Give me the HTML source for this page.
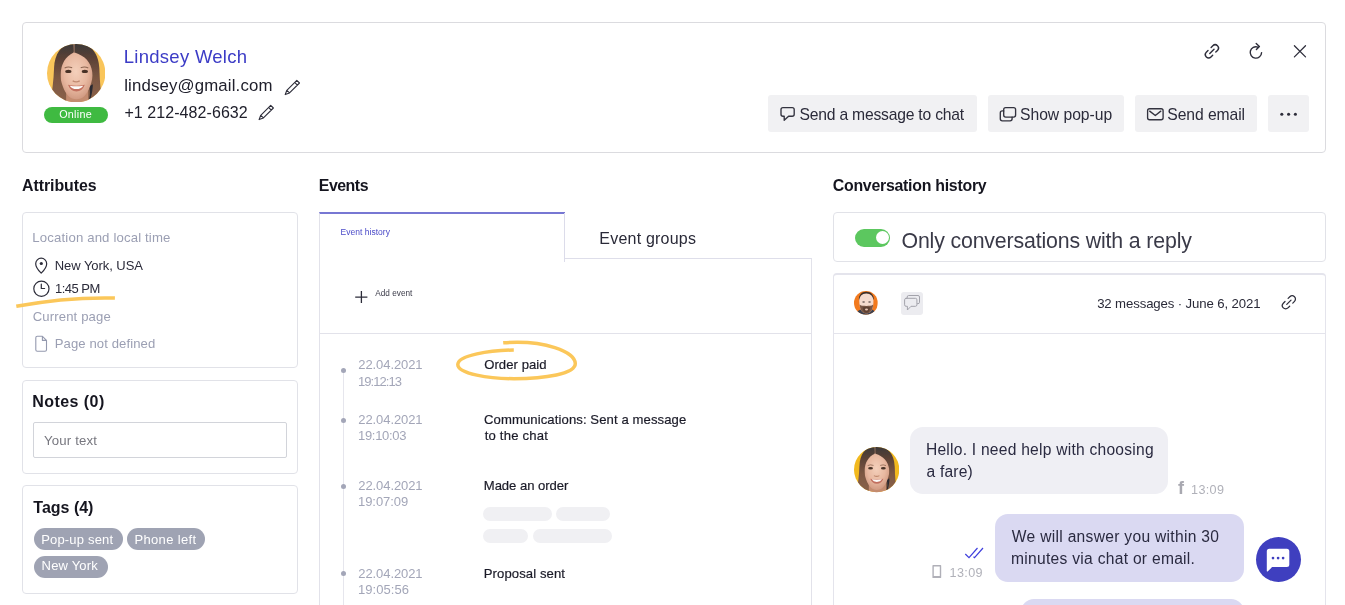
<!DOCTYPE html>
<html lang="en">
<head>
<meta charset="utf-8">
<title>Lindsey Welch</title>
<style>
*{box-sizing:border-box;margin:0;padding:0}
html,body{width:1345px;height:605px;overflow:hidden;background:#fff}
body{position:relative;font-family:"Liberation Sans",sans-serif;color:#2b2b3a;-webkit-font-smoothing:antialiased}
.abs{position:absolute}
.card{position:absolute;border:1px solid #e1e2e8;border-radius:4px;background:#fff}
.t{position:absolute;white-space:nowrap;line-height:1}
#root{position:absolute;left:0;top:0;width:1345px;height:605px;overflow:hidden;will-change:transform}
.h{font-weight:bold;color:#15151f}
.gray{color:#9b9fb3}
.btn{position:absolute;top:95px;height:37px;background:#f1f1f3;border-radius:3px}
.tag{position:absolute;height:21.5px;border-radius:11px;background:#9fa3b3}
.date{color:#a3a6b8}
.ev{color:#1b1b28;-webkit-text-stroke:0.2px #1b1b28}
.msg{color:#2a2a40}
.tagt{color:#fff}
.dot{position:absolute;left:341.1px;width:5.4px;height:5.4px;border-radius:50%;background:#a3a6b8}
.pill{position:absolute;height:13.5px;border-radius:7px;background:#f0f0f3}
</style>
<style id="fit">
#onl{left:59.20px;top:108.66px;font-size:10.8px;letter-spacing:0.250px}
#name{left:123.71px;top:47.64px;font-size:18.5px;letter-spacing:0.285px}
#email{left:124.15px;top:77.98px;font-size:16.8px;letter-spacing:0.162px}
#phone{left:124.40px;top:105.36px;font-size:16px;letter-spacing:0.072px}
#b1{left:799.58px;top:106.51px;font-size:15.7px;letter-spacing:-0.220px}
#b2{left:1020.07px;top:106.51px;font-size:15.7px;letter-spacing:-0.035px}
#b3{left:1167.29px;top:106.51px;font-size:15.7px;letter-spacing:-0.078px}
#h1{left:22.04px;top:177.84px;font-size:15.9px;letter-spacing:-0.051px}
#h2{left:318.79px;top:177.84px;font-size:15.9px;letter-spacing:-0.482px}
#h3{left:832.78px;top:177.74px;font-size:15.9px;letter-spacing:-0.267px}
#a1{left:32.35px;top:230.83px;font-size:13.2px;letter-spacing:0.144px}
#a2{left:54.79px;top:258.50px;font-size:13px;letter-spacing:-0.062px}
#a3{left:54.91px;top:281.70px;font-size:13px;letter-spacing:-0.499px}
#a4{left:32.68px;top:310.11px;font-size:13.1px;letter-spacing:0.147px}
#a5{left:54.71px;top:337.41px;font-size:13.1px;letter-spacing:0.098px}
#n1{left:32.35px;top:394.36px;font-size:16px;letter-spacing:0.430px}
#n2{left:44.04px;top:434.43px;font-size:13.2px;letter-spacing:0.163px}
#g1{left:33.31px;top:500.06px;font-size:16px;letter-spacing:-0.003px}
#t1{left:41.16px;top:532.80px;font-size:13px;letter-spacing:0.182px}
#t2{left:134.43px;top:532.80px;font-size:13px;letter-spacing:0.339px}
#t3{left:41.62px;top:559.30px;font-size:13px;letter-spacing:0.162px}
#e1{left:340.61px;top:228.40px;font-size:8.5px;letter-spacing:0.019px}
#e2{left:599.36px;top:231.16px;font-size:16px;letter-spacing:0.207px}
#e3{left:375.27px;top:289.66px;font-size:8.2px;letter-spacing:0.023px}
#d1a{left:358.35px;top:357.60px;font-size:13px;letter-spacing:-0.097px}
#d1b{left:358.03px;top:374.50px;font-size:13px;letter-spacing:-0.945px}
#d2a{left:358.35px;top:412.50px;font-size:13px;letter-spacing:-0.097px}
#d2b{left:358.03px;top:429.40px;font-size:13px;letter-spacing:-0.303px}
#d3a{left:358.35px;top:478.60px;font-size:13px;letter-spacing:-0.097px}
#d3b{left:358.03px;top:495.40px;font-size:13px;letter-spacing:-0.065px}
#d4a{left:358.35px;top:566.80px;font-size:13px;letter-spacing:-0.097px}
#d4b{left:358.03px;top:583.30px;font-size:13px;letter-spacing:0.042px}
#v1{left:484.20px;top:357.51px;font-size:13.1px;letter-spacing:0.060px}
#v2a{left:484.03px;top:413.41px;font-size:13.1px;letter-spacing:0.098px}
#v2b{left:484.67px;top:429.31px;font-size:13.1px;letter-spacing:0.217px}
#v3{left:483.77px;top:478.51px;font-size:13.1px;letter-spacing:-0.043px}
#v4{left:483.77px;top:566.71px;font-size:13.1px;letter-spacing:0.090px}
#c1t{left:901.48px;top:231.27px;font-size:21.3px;letter-spacing:-0.144px}
#c2t{left:1097.15px;top:297.03px;font-size:13.2px;letter-spacing:-0.122px}
#m1a{left:925.91px;top:441.99px;font-size:15.6px;letter-spacing:0.242px}
#m1b{left:926.55px;top:463.69px;font-size:15.6px;letter-spacing:0.176px}
#fb{left:1178.01px;top:479.06px;font-size:18px;letter-spacing:0.000px}
#m1t{left:1191.11px;top:483.53px;font-size:12.6px;letter-spacing:0.334px}
#m2a{left:1011.82px;top:528.89px;font-size:15.6px;letter-spacing:0.300px}
#m2b{left:1011.07px;top:551.29px;font-size:15.6px;letter-spacing:0.283px}
#m2t{left:949.50px;top:566.93px;font-size:12.6px;letter-spacing:0.396px}
</style>
</head>
<body>
<div id="root">

<!-- ===== header card ===== -->
<div class="card" style="left:22px;top:22px;width:1304px;height:131px;border-color:#dbdbdf"></div>

<!-- avatar -->
<svg class="abs" style="left:0;top:0" width="0" height="0">
  <defs>
    <radialGradient id="skin" cx="0.48" cy="0.42" r="0.6">
      <stop offset="0" stop-color="#f4d0bb"/><stop offset="0.6" stop-color="#e8b8a0"/><stop offset="1" stop-color="#cf9880"/>
    </radialGradient>
    <linearGradient id="hair" x1="0" y1="0" x2="0" y2="1">
      <stop offset="0" stop-color="#3c3837"/><stop offset="0.25" stop-color="#5b4136"/><stop offset="0.6" stop-color="#7d5843"/><stop offset="1" stop-color="#8a6149"/>
    </linearGradient>
    <filter id="soft" x="-10%" y="-10%" width="120%" height="120%"><feGaussianBlur stdDeviation="0.55"/></filter>
    <clipPath id="cface"><circle cx="29" cy="29" r="29"/></clipPath>
    <g id="woman">
      <g filter="url(#soft)">
        <!-- hair back -->
        <path d="M25.5 -1 C14 0 7.5 10 7 24 C6.6 36 5 48 3 60 L56 60 C53 48 52.4 36 52 24 C51.5 10 44 0 32 -1 Z" fill="url(#hair)"/>
        <!-- neck / shoulders -->
        <path d="M19 46 L19 60 L41 60 L41 46 Z" fill="#c48c70"/>
        <path d="M41.5 42 C43.5 46 43 52 41 58 L45.5 58 C46.5 50 46.5 44 45.5 40 Z" fill="#2c2a30"/>
        <!-- face -->
        <path d="M29 7.5 C18.5 7.5 13 16 13 27 C13 38 17 47 21.5 52 C25 56 33.5 56 37 52 C41.5 47 45.5 38 45.5 27 C45.5 16 39.5 7.5 29 7.5 Z" fill="url(#skin)"/>
        <!-- hair front strands -->
        <path d="M26 0 C18 2 8 10 7.5 26 C7.2 38 8 48 10 58 L19 58 C15 50 13 40 13.6 30 C14 20 18 12.5 26.5 8.5 Z" fill="url(#hair)"/>
        <path d="M27 0 C38 1 50 9 51.5 25 C52.5 38 51 48 49 58 L42.5 57 C45.5 48 46.5 38 45 28 C43.5 18 38 12 27.5 8.5 Z" fill="url(#hair)"/>
        <path d="M26 0 L27.6 0 L27.6 8.6 L26.6 8.6 Z" fill="#8a6a5a"/>
        <!-- brows -->
        <path d="M17.5 23.8 Q21 22 25 23.6 M33.5 23.6 Q37.5 22 41 23.8" stroke="#8b6450" stroke-width="1" fill="none"/>
        <!-- eyes -->
        <ellipse cx="21.2" cy="27.3" rx="3.1" ry="1.6" fill="#4a3328"/>
        <ellipse cx="37.6" cy="27.3" rx="3.1" ry="1.6" fill="#4a3328"/>
        <!-- nose -->
        <path d="M25.5 36.6 Q29 38.6 32.5 36.6" stroke="#c08a70" stroke-width="1.3" fill="none"/>
        <!-- mouth -->
        <path d="M20.8 40.6 Q29 42.4 37.6 40.6 Q35 47.2 29.2 47.2 Q23.5 47.2 20.8 40.6 Z" fill="#c2705f"/>
        <path d="M22.6 41.4 Q29 42.6 36 41.4 Q33.8 44.8 29.2 44.8 Q24.8 44.8 22.6 41.4 Z" fill="#fdfbf8"/>
      </g>
    </g>
  </defs>
</svg>
<svg class="abs" style="left:47px;top:43.7px" width="58.4" height="58.4" viewBox="0 0 58 58">
  <g clip-path="url(#cface)"><rect width="58" height="58" fill="#f9c55a"/><use href="#woman"/></g>
</svg>
<div class="abs" style="left:44px;top:106.5px;width:64px;height:16.5px;border-radius:9px;background:#3fba41"></div>
<div class="t" id="onl" style="color:#fff">Online</div>

<div class="t" id="name" style="color:#3c3cc6">Lindsey Welch</div>
<div class="t" id="email" style="color:#20202c">lindsey@gmail.com</div>
<div class="t" id="phone" style="color:#20202c">+1 212-482-6632</div>

<!-- buttons -->
<div class="btn" style="left:768px;width:209px"></div>
<div class="btn" style="left:988px;width:136px"></div>
<div class="btn" style="left:1135px;width:122px"></div>
<div class="btn" style="left:1268px;width:41px"></div>
<div class="t" id="b1">Send a message to chat</div>
<div class="t" id="b2">Show pop-up</div>
<div class="t" id="b3">Send email</div>

<!-- ===== attributes ===== -->
<div class="t h" id="h1">Attributes</div>
<div class="card" style="left:22px;top:212px;width:276px;height:156px"></div>
<div class="t gray" id="a1">Location and local time</div>
<div class="t" id="a2">New York, USA</div>
<div class="t" id="a3">1:45 PM</div>
<div class="t gray" id="a4">Current page</div>
<div class="t gray" id="a5">Page not defined</div>

<div class="card" style="left:22px;top:380px;width:276px;height:94px"></div>
<div class="t h" id="n1">Notes (0)</div>
<div class="abs" style="left:33px;top:422px;width:254px;height:36px;border:1px solid #d2d4da;border-radius:2px"></div>
<div class="t" id="n2" style="color:#77777f">Your text</div>

<div class="card" style="left:22px;top:485px;width:276px;height:109px"></div>
<div class="t h" id="g1">Tags (4)</div>
<div class="tag" style="left:33.5px;top:528px;width:89.5px;height:22px"></div><div class="t tagt" id="t1">Pop-up sent</div>
<div class="tag" style="left:127px;top:528px;width:77.5px;height:22px"></div><div class="t tagt" id="t2">Phone left</div>
<div class="tag" style="left:33.5px;top:556px;width:74px"></div><div class="t tagt" id="t3">New York</div>

<!-- ===== events ===== -->
<div class="t h" id="h2">Events</div>
<div class="abs" style="left:319px;top:212px;width:245.5px;height:400px;border-left:1px solid #e2e2ea;border-top:2px solid #7777d3"></div>
<div class="abs" style="left:564px;top:213px;width:1px;height:48.5px;background:#dcdcea"></div>
<div class="abs" style="left:565px;top:258px;width:247px;height:360px;border-top:1px solid #dedeea;border-right:1px solid #e2e2ea"></div>
<div class="abs" style="left:320px;top:333px;width:491px;height:1px;background:#e2e2ea"></div>
<div class="t" id="e1" style="color:#4a4ac8">Event history</div>
<div class="t" id="e2" style="color:#2a2a38">Event groups</div>
<div class="t" id="e3" style="color:#3a3a48">Add event</div>

<div class="abs" style="left:343.2px;top:370px;width:1.2px;height:240px;background:#e6e6ed"></div>
<div class="dot" style="top:367.5px"></div>
<div class="dot" style="top:418px"></div>
<div class="dot" style="top:484px"></div>
<div class="dot" style="top:571px"></div>
<div class="t date" id="d1a">22.04.2021</div>
<div class="t date" id="d1b">19:12:13</div>
<div class="t date" id="d2a">22.04.2021</div>
<div class="t date" id="d2b">19:10:03</div>
<div class="t date" id="d3a">22.04.2021</div>
<div class="t date" id="d3b">19:07:09</div>
<div class="t date" id="d4a">22.04.2021</div>
<div class="t date" id="d4b">19:05:56</div>
<div class="t ev" id="v1">Order paid</div>
<div class="t ev" id="v2a">Communications: Sent a message</div>
<div class="t ev" id="v2b">to the chat</div>
<div class="t ev" id="v3">Made an order</div>
<div class="t ev" id="v4">Proposal sent</div>
<div class="pill" style="left:483px;top:507px;width:69px"></div>
<div class="pill" style="left:556px;top:507px;width:53.7px"></div>
<div class="pill" style="left:483px;top:529px;width:45px"></div>
<div class="pill" style="left:533px;top:529px;width:79px"></div>

<!-- ===== conversation ===== -->
<div class="t h" id="h3">Conversation history</div>
<div class="card" style="left:833px;top:212px;width:493px;height:50px"></div>
<div class="abs" style="left:855px;top:229px;width:35.3px;height:17.5px;border-radius:9px;background:#5cc75f"></div>
<div class="abs" style="left:875.9px;top:231.3px;width:13px;height:13px;border-radius:50%;background:#fff"></div>
<div class="t" id="c1t" style="color:#3a3a48">Only conversations with a reply</div>

<div class="card" style="left:833px;top:273px;width:493px;height:360px;border-color:#e4e4ec;border-top-width:2px"></div>
<div class="abs" style="left:834px;top:333px;width:491px;height:1px;background:#e4e4ec"></div>
<svg class="abs" style="left:854.1px;top:290.8px" width="23.8" height="23.8" viewBox="0 0 24 24">
  <defs><clipPath id="cman"><circle cx="12" cy="12" r="12"/></clipPath>
  <filter id="soft2" x="-10%" y="-10%" width="120%" height="120%"><feGaussianBlur stdDeviation="0.45"/></filter></defs>
  <g clip-path="url(#cman)"><rect width="24" height="24" fill="#f27a1e"/>
  <g filter="url(#soft2)">
    <path d="M1 24 L3.5 20.5 L7 18.5 L18 18.5 L21 20.5 L23 24 Z" fill="#3a4150"/>
    <path d="M12.4 0.8 C7.4 0.8 4.8 4.4 4.9 8.5 L20 8.5 C20 4.4 17.4 0.8 12.4 0.8 Z" fill="#3f2f28"/>
    <path d="M12.4 2.4 C8 2.4 5.2 5.4 5.3 10 C5.4 14.4 6 18 8 20.6 C10 23 15 23 17 20.6 C19 18 19.6 14.4 19.6 10 C19.6 5.4 16.8 2.4 12.4 2.4 Z" fill="#f5dacd"/>
    <path d="M5.6 13.6 C6 17 6.8 19.4 8.2 21 C10.2 23.2 14.8 23.2 16.8 21 C18.2 19.4 19 17 19.4 13.6 C17.6 15.4 15.2 14.6 12.5 15.2 C9.8 14.6 7.4 15.4 5.6 13.6 Z" fill="#7a5644"/>
    <path d="M8.6 16.6 C9.4 20.4 10.6 22 12.5 22 C14.4 22 15.6 20.4 16.4 16.6 C14.4 15.6 10.6 15.6 8.6 16.6 Z" fill="#5e4133"/>
    <ellipse cx="12.6" cy="18.6" rx="1.5" ry="1.0" fill="#e9c4b4"/>
    <ellipse cx="9.7" cy="11.1" rx="1.4" ry="0.7" fill="#6a5a58"/>
    <ellipse cx="15.7" cy="11.1" rx="1.4" ry="0.7" fill="#6a5a58"/>
  </g></g>
</svg>
<div class="abs" style="left:900.5px;top:292px;width:22.5px;height:22.5px;border-radius:3px;background:#ececf0"></div>
<div class="t" id="c2t" style="color:#2a2a38">32 messages · June 6, 2021</div>

<div class="abs" style="left:910px;top:427px;width:257.5px;height:67.3px;border-radius:13px;background:#efeff4"></div>
<div class="t msg" id="m1a">Hello. I need help with choosing</div>
<div class="t msg" id="m1b">a fare)</div>
<div class="t" id="fb" style="font-weight:bold;color:#a8a8b0">f</div>
<div class="t" id="m1t" style="color:#b0b1b9">13:09</div>

<div class="abs" style="left:994.5px;top:514px;width:249.2px;height:68px;border-radius:13px;background:#dad9f2"></div>
<div class="t msg" id="m2a">We will answer you within 30</div>
<div class="t msg" id="m2b">minutes via chat or email.</div>
<div class="t" id="m2t" style="color:#b0b1b9">13:09</div>
<div class="abs" style="left:1021px;top:599px;width:223px;height:30px;border-radius:13px;background:#dad9f2"></div>

<div class="abs" style="left:1255.6px;top:536.6px;width:45.2px;height:45.2px;border-radius:50%;background:#3f3fbf"></div>

<svg class="abs" style="left:854px;top:447.4px" width="45.3" height="45.3" viewBox="0 0 58 58">
  <g clip-path="url(#cface)"><rect width="58" height="58" fill="#f2b91e"/><use href="#woman"/></g>
</svg>
<!-- ===== icons overlay ===== -->
<svg class="abs" style="left:0;top:0;pointer-events:none" width="1345" height="605" viewBox="0 0 1345 605" fill="none" stroke-linecap="round" stroke-linejoin="round">
  <!-- pencils -->
  <g stroke="#2d2d3a" stroke-width="1.1" stroke-linecap="butt">
    <g transform="translate(285.2 94.6) rotate(-45)"><path d="M0 0 L4.2 1.9 H18.3 V-1.9 H4.2 Z M4.2 -1.9 V1.9 M15.3 -1.9 V1.9"/></g>
    <g transform="translate(259.1 119.6) rotate(-45)"><path d="M0 0 L4.2 1.9 H18.3 V-1.9 H4.2 Z M4.2 -1.9 V1.9 M15.3 -1.9 V1.9"/></g>
  </g>
  <!-- top right: link / refresh / close -->
  <g stroke="#2d2d3a" stroke-width="1.4">
    <g transform="translate(1211.9 51.3) rotate(-45)"><path d="M2.2 -3.3 H4.6 A3.3 3.3 0 0 1 4.6 3.3 H2.2 M-2.2 -3.3 H-4.6 A3.3 3.3 0 0 0 -4.6 3.3 H-2.2 M-3 0 H3"/></g>
    <path d="M1257.9 47.1 A5.7 5.7 0 1 0 1261.6 52.6 M1256.2 43.6 L1259.4 46.6 L1256.4 49.6"/>
    <path d="M1294.4 45.7 L1305.5 56.9 M1305.5 45.7 L1294.4 56.9" stroke-width="1.25"/>
  </g>
  <!-- button icons -->
  <g stroke="#33333f" stroke-width="1.35">
    <path d="M783 107.6 H792.2 a2 2 0 0 1 2 2 V114.2 a2 2 0 0 1 -2 2 H788.6 L784.2 120.3 V116.2 H783 a2 2 0 0 1 -2 -2 V109.6 a2 2 0 0 1 2 -2 Z"/>
    <rect x="1003.7" y="107.6" width="11.9" height="9.5" rx="2"/>
    <path d="M1003.7 110.9 H1002.3 a2 2 0 0 0 -2 2 V118.8 a2 2 0 0 0 2 2 H1010.1 a2 2 0 0 0 2 -2 V117.1"/>
    <rect x="1147.6" y="108.7" width="15.5" height="11" rx="2"/>
    <path d="M1149.7 111.1 L1155.3 115.5 L1160.8 111.1"/>
  </g>
  <g fill="#2d2d3a"><circle cx="1281.8" cy="114.3" r="1.55"/><circle cx="1288.6" cy="114.3" r="1.55"/><circle cx="1295.4" cy="114.3" r="1.55"/></g>
  <!-- attributes icons -->
  <g stroke="#2d2d3a" stroke-width="1.2">
    <path d="M41.2 273.2 C38 270 35.7 267 35.7 263.7 a5.5 5.5 0 0 1 11 0 C46.7 267 44.4 270 41.2 273.2 Z"/>
    <circle cx="41.4" cy="288.7" r="7.6"/>
    <path d="M41.3 284.2 V288.5 H44.6"/>
  </g>
  <circle cx="41.3" cy="263.5" r="1.6" fill="#2d2d3a"/>
  <path d="M37.3 336.3 H42.4 L46.5 340.4 V349.7 a1.5 1.5 0 0 1 -1.5 1.5 H37.3 a1.5 1.5 0 0 1 -1.5 -1.5 V337.8 a1.5 1.5 0 0 1 1.5 -1.5 Z M42.4 336.3 V340.4 H46.5" stroke="#9499ae" stroke-width="1.1"/>
  <!-- yellow scribbles -->
  <path d="M16.3 306.3 Q65.8 296.9 114.9 298" stroke="#fbc75a" stroke-width="3.5" stroke-linecap="butt"/>
  <path d="M513.8 350 C490 350.5 458 355 457.8 364.5 C457.6 374 490 378.7 514 378.7 C545 378.7 575.5 374 575.3 363.5 C575 352 545 339.5 503.2 342.8" stroke="#fbc75a" stroke-width="3.5" stroke-linecap="butt"/>
  <!-- plus -->
  <path d="M355.2 297.1 H367.4 M361.4 290.9 V302.9" stroke="#2d2d3a" stroke-width="1.3" stroke-linecap="butt"/>
  <!-- conversation header icons -->
  <g stroke="#a3a3ab" stroke-width="1">
    <path d="M907.2 298 V297 a1.5 1.5 0 0 1 1.5 -1.5 H918 a1.5 1.5 0 0 1 1.5 1.5 V302.2 a1.5 1.5 0 0 1 -1.5 1.5 H917.4"/>
    <path d="M906.1 298.3 H915.4 a1.5 1.5 0 0 1 1.5 1.5 V304.8 a1.5 1.5 0 0 1 -1.5 1.5 H911 L907.4 310 V306.3 H906.1 a1.5 1.5 0 0 1 -1.5 -1.5 V299.8 a1.5 1.5 0 0 1 1.5 -1.5 Z"/>
  </g>
  <g stroke="#2d2d3a" stroke-width="1.25">
    <g transform="translate(1288.9 302.3) rotate(-45)"><path d="M2.2 -3.3 H4.6 A3.3 3.3 0 0 1 4.6 3.3 H2.2 M-2.2 -3.3 H-4.6 A3.3 3.3 0 0 0 -4.6 3.3 H-2.2 M-3 0 H3"/></g>
  </g>
  <!-- message meta icons -->
  <path d="M965.3 554 L969 557.6 L977.5 548 M973.5 556.8 L974.5 557.6 L983 548" stroke="#4040dd" stroke-width="1.2" stroke-linecap="butt" stroke-linejoin="miter"/>
  <path d="M933.1 565.8 H940.5 V577.4 H933.1 Z M933.1 576.6 H940.5" stroke="#b0b0b8" stroke-width="1.4" stroke-linejoin="round"/>
  <!-- chat button glyph -->
  <path d="M1269.3 548.8 H1286.8 a2.5 2.5 0 0 1 2.5 2.5 V564.6 a2.5 2.5 0 0 1 -2.5 2.5 H1272.1 L1267.6 571.4 a0.5 0.5 0 0 1 -0.8 -0.4 V551.3 a2.5 2.5 0 0 1 2.5 -2.5 Z" fill="#fff"/>
  <g fill="#3f3fbf"><circle cx="1273" cy="558.1" r="1.35"/><circle cx="1278.1" cy="558.1" r="1.35"/><circle cx="1283.1" cy="558.1" r="1.35"/></g>
</svg>

</div>
</body>
</html>
